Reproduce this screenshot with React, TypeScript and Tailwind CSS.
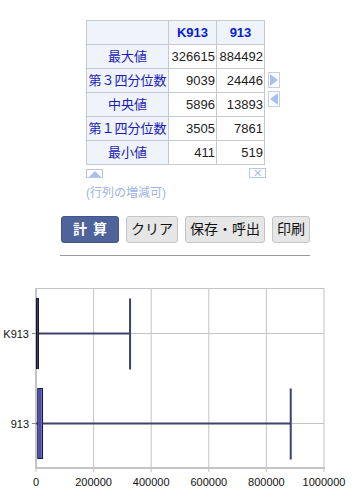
import React from "react";

type Row = { label: string; a: string; b: string };

const rows: Row[] = [
  { label: "最大値", a: "326615", b: "884492" },
  { label: "第３四分位数", a: "9039", b: "24446" },
  { label: "中央値", a: "5896", b: "13893" },
  { label: "第１四分位数", a: "3505", b: "7861" },
  { label: "最小値", a: "411", b: "519" },
];

const FONT = { fontFamily: '"Liberation Sans", "Noto Sans CJK JP", sans-serif' };

// scale for the chart: 0..1000000 -> 36..324
const sx = (v: number) => 36 + (v / 1000000) * 288;

const BoxPlot: React.FC<{
  cy: number;
  min: number;
  q1: number;
  med: number;
  q3: number;
  max: number;
}> = ({ cy, min, q1, med, q3, max }) => {
  const top = cy - 35;
  const h = 70;
  return (
    <g>
      <line x1={sx(min)} y1={cy} x2={sx(q1)} y2={cy} stroke="#40406e" strokeWidth={2} />
      <line x1={sx(q3)} y1={cy} x2={sx(max)} y2={cy} stroke="#40406e" strokeWidth={2} />
      <line x1={sx(max)} y1={top} x2={sx(max)} y2={top + h + 1} stroke="#40406e" strokeWidth={2} />
      <rect
        x={sx(q1) - 0.5}
        y={top}
        width={Math.max(sx(q3) - sx(q1), 2)}
        height={h}
        fill="#6b6be6"
        stroke="#14142a"
        strokeWidth={1}
      />
      <line x1={sx(med)} y1={top} x2={sx(med)} y2={top + h} stroke="#30305a" strokeWidth={1} />
    </g>
  );
};

const Chart: React.FC = () => {
  const grid = [0, 200000, 400000, 600000, 800000, 1000000];
  return (
    <svg width={355} height={222} className="block">
      {/* plot border + gridlines */}
      <rect x={36} y={6.5} width={288} height={180} fill="white" stroke="#c4c4c4" strokeWidth={1} />
      {grid.slice(1, 5).map((g) => (
        <line key={g} x1={sx(g)} y1={6} x2={sx(g)} y2={186} stroke="#c4c4c4" strokeWidth={1} />
      ))}
      <line x1={36} y1={51.5} x2={324} y2={51.5} stroke="#c4c4c4" strokeWidth={1} />
      <line x1={36} y1={141.5} x2={324} y2={141.5} stroke="#c4c4c4" strokeWidth={1} />
      {/* axes */}
      <line x1={36} y1={6} x2={36} y2={187} stroke="#c4c4c4" strokeWidth={2} />
      <line x1={35} y1={186} x2={325} y2={186} stroke="#c4c4c4" strokeWidth={2} />
      {grid.map((g) => (
        <line key={"t" + g} x1={sx(g)} y1={186} x2={sx(g)} y2={190} stroke="#c4c4c4" strokeWidth={1} />
      ))}
      <line x1={32} y1={51.5} x2={36} y2={51.5} stroke="#888" strokeWidth={1} />
      <line x1={32} y1={141.5} x2={36} y2={141.5} stroke="#888" strokeWidth={1} />

      <BoxPlot cy={51.5} min={411} q1={3505} med={5896} q3={9039} max={326615} />
      <BoxPlot cy={141.5} min={519} q1={7861} med={13893} q3={24446} max={884492} />

      <g style={FONT} fontSize={11} fill="#111">
        <text x={29} y={55.5} textAnchor="end">K913</text>
        <text x={29} y={145.5} textAnchor="end">913</text>
        {grid.map((g) => (
          <text key={"l" + g} x={sx(g)} y={204} textAnchor="middle">
            {g}
          </text>
        ))}
      </g>
    </svg>
  );
};

export default function App() {
  return (
    <div className="w-[355px] h-[502px] bg-white overflow-hidden" style={FONT}>
      {/* Table */}
      <div className="flex pt-[20px] pl-[86px]">
        <div className="flex flex-col">
          <table className="border-collapse w-[179px] text-[13px]">
            <thead>
              <tr className="h-[24px]">
                <th className="w-[82px] bg-[#eef3fc] border border-[#c8c8c8]"></th>
                <th className="w-[48px] bg-[#eef3fc] border border-[#c8c8c8] text-[#0a1fd0] font-bold text-center">
                  K913
                </th>
                <th className="w-[48px] bg-[#eef3fc] border border-[#c8c8c8] text-[#0a1fd0] font-bold text-center">
                  913
                </th>
              </tr>
            </thead>
            <tbody>
              {rows.map((r) => (
                <tr key={r.label} className="h-[24px]">
                  <td className="bg-[#eef3fc] border border-[#c8c8c8] text-[#1c1cb4] text-center whitespace-nowrap px-0">
                    {r.label}
                  </td>
                  <td className="border border-[#c8c8c8] text-right pr-[1px] text-[#222]">{r.a}</td>
                  <td className="border border-[#c8c8c8] text-right pr-[1px] text-[#222]">{r.b}</td>
                </tr>
              ))}
            </tbody>
          </table>
          <div className="flex justify-between items-start mt-[4px] w-[179px]">
            <div className="w-[17px] h-[9px] border border-[#b6c6ee] flex items-center justify-center">
              <div className="w-0 h-0 border-l-[6px] border-r-[6px] border-b-[6px] border-l-transparent border-r-transparent border-b-[#a9bfef]" />
            </div>
            <div className="w-[17px] h-[10px] mr-[-1px] mt-[-1px] border border-[#b6c6ee] flex items-center justify-center text-[#a9bfef] text-[11px] leading-none">
              ✕
            </div>
          </div>
          <div className="mt-[8px] text-[12px] leading-[14px] text-[#9db3e6]">(行列の増減可)</div>
        </div>
        <div className="flex flex-col gap-[3px] ml-[3px] mt-[52px]">
          <div className="w-[12px] h-[16px] border border-[#c0cff0] flex items-center justify-center">
            <div className="w-0 h-0 border-t-[6px] border-b-[6px] border-l-[8px] border-t-transparent border-b-transparent border-l-[#a9bfef]" />
          </div>
          <div className="w-[12px] h-[16px] border border-[#c0cff0] flex items-center justify-center">
            <div className="w-0 h-0 border-t-[6px] border-b-[6px] border-r-[8px] border-t-transparent border-b-transparent border-r-[#a9bfef]" />
          </div>
        </div>
      </div>

      {/* Buttons */}
      <div className="flex gap-[7px] pl-[61px] mt-[16px] text-[14px]">
        <button className="h-[27px] w-[58px] rounded-[3px] bg-[#4d6399] border border-[#40568a] text-white font-bold tracking-[6px] pl-[6px]">
          計算
        </button>
        <button className="h-[27px] px-[4px] rounded-[3px] bg-[#e6e6e6] border border-[#c4c4c4] text-[#111]">
          クリア
        </button>
        <button className="h-[27px] px-[4px] rounded-[3px] bg-[#e6e6e6] border border-[#c4c4c4] text-[#111]">
          保存・呼出
        </button>
        <button className="h-[27px] px-[4px] rounded-[3px] bg-[#e6e6e6] border border-[#c4c4c4] text-[#111]">
          印刷
        </button>
      </div>
      <div className="ml-[60px] mt-[12px] w-[250px] h-px bg-[#9a9a9a]" />

      {/* Chart */}
      <div className="mt-[26px]">
        <Chart />
      </div>
    </div>
  );
}
